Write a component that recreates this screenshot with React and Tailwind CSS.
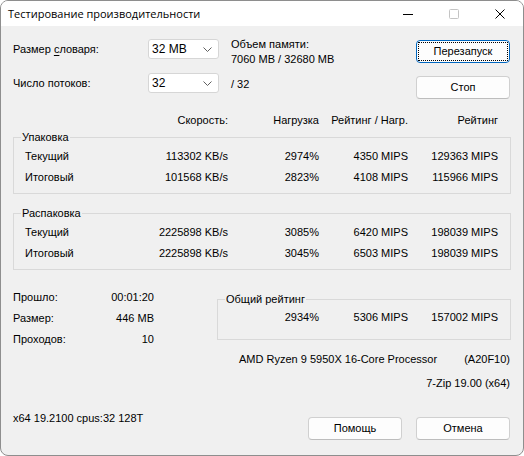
import React from "react";

const rows1 = [
    { name: "Текущий", speed: "113302 KB/s", load: "2974%", rl: "4350 MIPS", r: "129363 MIPS" },
    { name: "Итоговый", speed: "101568 KB/s", load: "2823%", rl: "4108 MIPS", r: "115966 MIPS" },
]

const rows2 = [
    { name: "Текущий", speed: "2225898 KB/s", load: "3085%", rl: "6420 MIPS", r: "198039 MIPS" },
    { name: "Итоговый", speed: "2225898 KB/s", load: "3045%", rl: "6503 MIPS", r: "198039 MIPS" },
]

function Combo({ value }) {
    return <div className="flex h-[20px] w-[71px] items-center rounded-[3px] border border-[#d6d6d6] bg-white pl-[3px] pr-[6px]">
        <span className="flex-1 text-[12px]">{value}</span>
        <svg width="9" height="5" viewBox="0 0 9 5" fill="none" stroke="#5f5f5f" strokeWidth="1">
            <path d="M0.5 0.5 L4.5 4.5 L8.5 0.5" />
        </svg>
    </div>
}

function Button({ label, def }) {
    if (def) {
        return <div className="flex h-[23px] w-[94px] rounded-[4px] border border-[#0067c0] bg-[#fdfdfd] p-[1px]">
            <div className="flex flex-1 items-center justify-center border border-dotted border-black">{label}</div>
        </div>
    }
    return <div className="flex h-[23px] w-[94px] items-center justify-center rounded-[4px] border border-[#d0d0d0] border-b-[#bdbdbd] bg-[#fdfdfd]">
        {label}
    </div>
}

function Row({ item }) {
    return <div className="ml-[4px] flex h-[21px] items-center">
        <span className="flex-1">{item.name}</span>
        <span className="text-right">{item.speed}</span>
        <span className="w-[91px] text-right">{item.load}</span>
        <span className="w-[89px] text-right">{item.rl}</span>
        <span className="w-[90px] text-right">{item.r}</span>
    </div>
}

function Group({ title, children, className = "" }) {
    return <fieldset className={`border border-[#d9d9d9] pl-[7px] pr-[12px] ${className}`}>
        <legend className="px-[1px] leading-[13px]">{title}</legend>
        {children}
    </fieldset>
}

export default function App() {
    return <div className="h-[456px] w-[524px] bg-white">
        <div className="flex h-[456px] w-[524px] flex-col overflow-hidden rounded-[8px] border border-[#8e8e8e] bg-[#f0f0f0] font-['Liberation_Sans',Arial,sans-serif] text-[11px] leading-[15px] text-black">

            {/* title bar */}
            <div className="flex h-[25px] shrink-0 items-center bg-white">
                <span className="pl-[7px] font-['Open_Sans','Noto_Sans',sans-serif] text-[11px]">Тестирование производительности</span>
                <div className="ml-auto flex h-full">
                    <div className="flex w-[46px] items-center justify-center">
                        <svg width="10" height="10" viewBox="0 0 10 10"><path d="M0 5.5 H10" stroke="#000" strokeWidth="1" /></svg>
                    </div>
                    <div className="flex w-[46px] items-center justify-center">
                        <svg width="10" height="10" viewBox="0 0 10 10"><rect x="0.5" y="0.5" width="9" height="9" rx="1" fill="none" stroke="#c4c4c4" /></svg>
                    </div>
                    <div className="flex w-[46px] items-center justify-center">
                        <svg width="10" height="10" viewBox="0 0 10 10"><path d="M0.5 0.5 L9.5 9.5 M9.5 0.5 L0.5 9.5" stroke="#000" strokeWidth="1" /></svg>
                    </div>
                </div>
            </div>

            {/* body */}
            <div className="flex flex-1 flex-col px-[12px] pt-[10px]">
                <div className="flex items-start">
                    <div className="flex w-[206px] flex-col gap-[14px] pt-[3px]">
                        <div className="flex h-[20px] items-center">
                            <span className="w-[135px]">Размер <u className="underline-offset-2">с</u>ловаря:</span>
                            <Combo value="32 MB" />
                        </div>
                        <div className="flex h-[20px] items-center">
                            <span className="w-[135px]">Число потоков:</span>
                            <Combo value="32" />
                        </div>
                    </div>
                    <div className="ml-[12px] flex w-[185px] flex-col pt-[1px]">
                        <span>Объем памяти:</span>
                        <span>7060 MB / 32680 MB</span>
                        <span className="mt-[10px]">/ 32</span>
                    </div>
                    <div className="flex flex-col gap-[13px] pt-[4px]">
                        <Button label="Перезапуск" def />
                        <Button label="Стоп" />
                    </div>
                </div>

                <div className="mt-[14px] flex h-[15px] items-center pr-[13px]">
                    <span className="flex-1 text-right">Скорость:</span>
                    <span className="w-[91px] text-right">Нагрузка</span>
                    <span className="w-[89px] text-right">Рейтинг / Нагр.</span>
                    <span className="w-[90px] text-right">Рейтинг</span>
                </div>

                <Group title="Упаковка" className="mt-[3px] pb-[5px]">
                    <div className="pt-[2px]">
                        {rows1.map((item, idx) => <Row key={idx} item={item} />)}
                    </div>
                </Group>

                <Group title="Распаковка" className="mt-[13px] pb-[5px]">
                    <div className="pt-[2px]">
                        {rows2.map((item, idx) => <Row key={idx} item={item} />)}
                    </div>
                </Group>

                <div className="mt-[17px] flex items-start">
                    <div className="flex w-[141px] flex-col">
                        <div className="flex h-[21px] items-center justify-between"><span>Прошло:</span><span>00:01:20</span></div>
                        <div className="flex h-[21px] items-center justify-between"><span>Размер:</span><span>446 MB</span></div>
                        <div className="flex h-[21px] items-center justify-between"><span>Проходов:</span><span>10</span></div>
                    </div>
                    <Group title="Общий рейтинг" className="ml-auto mt-[6px] w-[294px] pb-[12px]">
                        <div className="flex h-[21px] items-center justify-end pt-[2px]">
                            <span className="w-[91px] text-right">2934%</span>
                            <span className="w-[89px] text-right">5306 MIPS</span>
                            <span className="w-[90px] text-right">157002 MIPS</span>
                        </div>
                    </Group>
                </div>

                <div className="ml-[226px] mr-[1px] mt-[2px] flex justify-between">
                    <span>AMD Ryzen 9 5950X 16-Core Processor</span>
                    <span>(A20F10)</span>
                </div>
                <div className="mr-[1px] mt-[9px] text-right">7-Zip 19.00 (x64)</div>

                <div className="mt-[20px] flex items-start">
                    <span>x64 19.2100 cpus:32 128T</span>
                    <div className="ml-auto mr-[1px] mt-[6px] flex gap-[14px]">
                        <Button label="Помощь" />
                        <Button label="Отмена" />
                    </div>
                </div>
            </div>
        </div>
    </div>
}
